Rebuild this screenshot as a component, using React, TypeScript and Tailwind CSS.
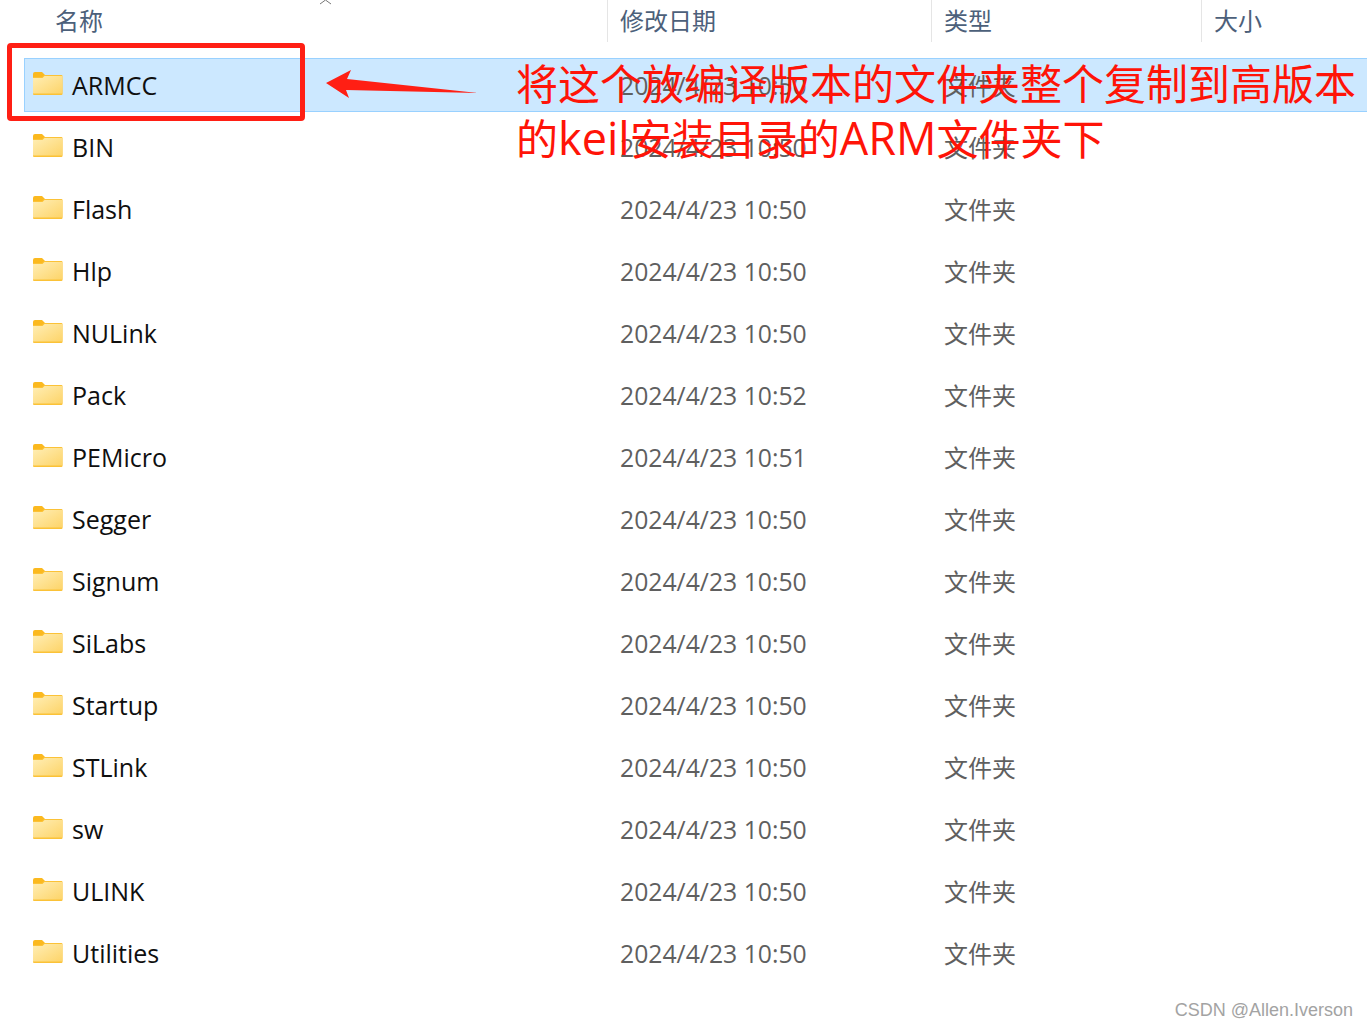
const ROWS = [
  { name: 'ARMCC', date: '2024/4/23 10:50' },
  { name: 'BIN', date: '2024/4/23 10:50' },
  { name: 'Flash', date: '2024/4/23 10:50' },
  { name: 'Hlp', date: '2024/4/23 10:50' },
  { name: 'NULink', date: '2024/4/23 10:50' },
  { name: 'Pack', date: '2024/4/23 10:52' },
  { name: 'PEMicro', date: '2024/4/23 10:51' },
  { name: 'Segger', date: '2024/4/23 10:50' },
  { name: 'Signum', date: '2024/4/23 10:50' },
  { name: 'SiLabs', date: '2024/4/23 10:50' },
  { name: 'Startup', date: '2024/4/23 10:50' },
  { name: 'STLink', date: '2024/4/23 10:50' },
  { name: 'sw', date: '2024/4/23 10:50' },
  { name: 'ULINK', date: '2024/4/23 10:50' },
  { name: 'Utilities', date: '2024/4/23 10:50' },
]

function FolderIcon() {
  return (
    <svg width="30" height="23" viewBox="0 0 30 23" className="mb-[3px] shrink-0">
      <defs>
        <linearGradient id="folderFill" x1="0" y1="0" x2="1" y2="1">
          <stop offset="0" stopColor="#ffeeb5" />
          <stop offset="1" stopColor="#fdd469" />
        </linearGradient>
      </defs>
      <path d="M0 2a2 2 0 0 1 2-2h7l3 3v3H0z" fill="#fbb91f" />
      <path d="M11 3H28.500a1 1 0 0 1 1 1v18a1 1 0 0 1-1 1H1a1 1 0 0 1-1-1V5h9z" fill="#fbc237" />
      <path d="M0 6h9.500l2-2h18v17.500H0z" fill="url(#folderFill)" />
    </svg>
  )
}

function Row({ name, date, selected }: { name: string; date: string; selected?: boolean }) {
  return (
    <div
      className={`flex h-[54px] items-center border-y border-l ${
        selected ? 'border-[#99d1ff] bg-[#cce8ff]' : 'border-transparent'
      }`}
    >
      <div className="flex w-[583px] shrink-0 items-center gap-[9px] pl-2">
        <FolderIcon />
        <span className="text-[#0f0f0f]">{name}</span>
      </div>
      <span className="w-[324px] shrink-0 pl-[12px] pt-[2px] text-[24.750px] text-[#5f5f5f]">{date}</span>
      <span className="pl-[12px] pt-[2px] text-[24px] text-[#5f5f5f]">文件夹</span>
    </div>
  )
}

export default function App() {
  return (
    <div
      className="relative h-[1027px] w-[1367px] overflow-hidden bg-white text-[25px] leading-none"
      style={{ fontFamily: '"Open Sans", "Noto Sans CJK SC", sans-serif' }}
    >
      {/* column headers */}
      <div className="flex h-[46px] items-center pb-[4px] pl-[24px] text-[24px] text-[#4c607a]">
        <span className="w-[583px] shrink-0 pl-[31px]">名称</span>
        <span className="flex h-full w-[324px] shrink-0 items-center border-l border-[#e5e5e5] pl-[12px]">修改日期</span>
        <span className="flex h-full w-[270px] shrink-0 items-center border-l border-[#e5e5e5] pl-[12px]">类型</span>
        <span className="flex h-full items-center border-l border-[#e5e5e5] pl-[12px]">大小</span>
      </div>

      {/* file rows */}
      <div className="mt-[12px] flex flex-col gap-[8px] pl-[24px]">
        {ROWS.map((r, i) => (
          <Row key={r.name} name={r.name} date={r.date} selected={i === 0} />
        ))}
      </div>

      {/* sort chevron cut by the top edge */}
      <svg width="16" height="5" viewBox="0 0 16 5" className="absolute left-[318px] top-0">
        <path d="M2 4 7.500 0 13 4" fill="none" stroke="#777" strokeWidth="1" />
      </svg>

      {/* annotation */}
      <div className="absolute left-[7px] top-[43px] h-[78px] w-[298px] rounded-[4px] border-[5px] border-[#ff1f14]" />
      <svg width="160" height="36" viewBox="0 0 160 36" className="absolute left-[324px] top-[68px]">
        <path d="M2 15 27 2 23 11 154 25 22 22 25 30z" fill="#ff1f14" />
      </svg>
      <div className="absolute left-[516px] top-[56px] whitespace-nowrap text-[42px] leading-[55px] text-[#ff1408]">
        <div>将这个放编译版本的文件夹整个复制到高版本</div>
        <div className="-mt-px">
          的<span className="text-[45px]">keil</span>安装目录的<span className="text-[45px]">ARM</span>文件夹下
        </div>
      </div>

      <span
        className="absolute right-[14px] top-[1001px] text-[18px] text-[#a3a3a3]"
        style={{ fontFamily: '"Liberation Sans", sans-serif' }}
      >
        CSDN @Allen.Iverson
      </span>
    </div>
  )
}
